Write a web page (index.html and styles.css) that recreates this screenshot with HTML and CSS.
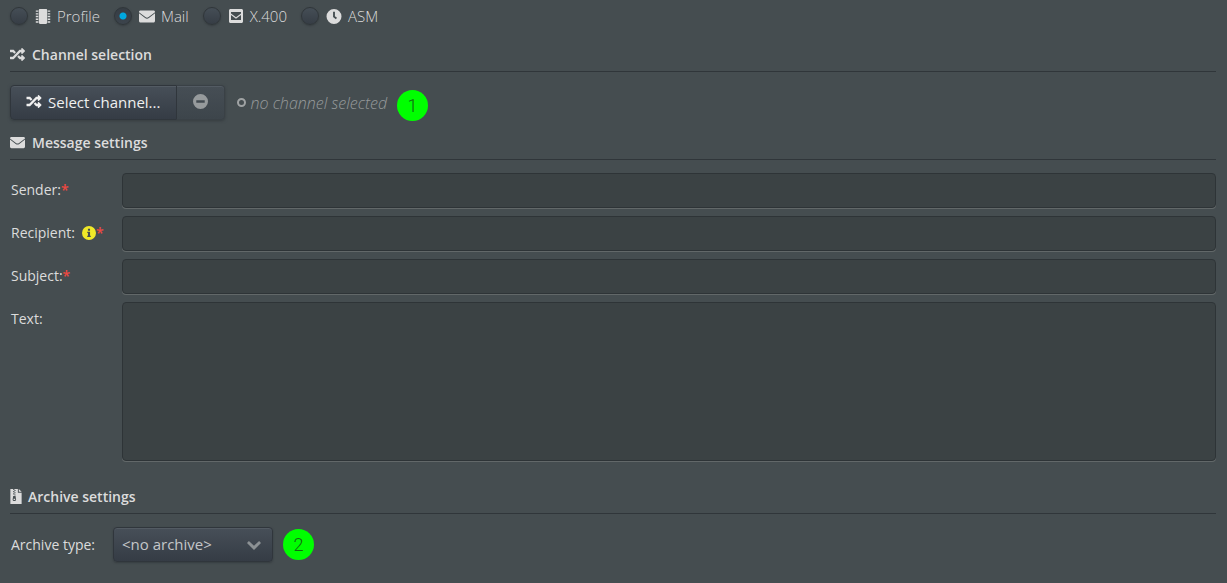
FILE: index.html
```html
<!DOCTYPE html>
<html lang="en">
<head>
<meta charset="utf-8">
<title>Channel configuration</title>
<link rel="stylesheet" href="styles.css">
</head>
<body>
<svg class="sprite" aria-hidden="true">
  <symbol id="shuffle" viewBox="0 0 512 512"><path d="M505 359c9 9 9 25 0 34l-80 80c-15 15-41 4-41-17v-40h-58c-4 0-7-1-9-4l-70-75 53-57 53 56h31v-40c0-21 26-32 41-17zM12 176h84l53 56 53-57-70-75c-2-3-5-4-9-4H12C5 96 0 101 0 108v56c0 7 5 12 12 12zm372 0v40c0 21 26 32 41 17l80-80c9-9 9-25 0-34l-80-80c-15-15-41-4-41 17v40h-58c-3 0-7 1-9 4L96 336H12c-7 0-12 5-12 12v56c0 7 5 12 12 12h111c3 0 6-1 8-4l222-236z"/></symbol>
  <symbol id="mail" viewBox="0 0 16 12"><path d="M1.500 0h13c.8 0 1.500.6 1.500 1.400v.3L9.300 6.700c-.8.600-1.800.600-2.600 0L0 1.700v-.3C0 .6.700 0 1.500 0zM0 2.800l6.100 4.700c1.100.9 2.700.9 3.800 0L16 2.800v7.700c0 .8-.7 1.500-1.500 1.500h-13C.7 12 0 11.300 0 10.500z"/></symbol>
  <symbol id="chip" viewBox="0 0 16 16"><path d="M5 0h6c1 0 1.500.5 1.500 1.500v13c0 1-.5 1.500-1.500 1.500H5c-1 0-1.500-.5-1.500-1.500v-13C3.500.5 4 0 5 0z"/><path d="M.3 1.500H3V3H.3zm0 2.900H3v1.500H.3zm0 2.900H3v1.500H.3zm0 2.900H3v1.500H.3zm0 2.900H3v1.500H.3zM13 1.500h2.700V3H13zm0 2.900h2.700v1.500H13zm0 2.900h2.700v1.500H13zm0 2.900h2.700v1.500H13zm0 2.900h2.700v1.500H13z"/></symbol>
  <symbol id="mailbox" viewBox="0 0 14 14"><path fill-rule="evenodd" d="M1.500 0h11c.8 0 1.500.7 1.500 1.500v11c0 .8-.7 1.500-1.500 1.500h-11C.7 14 0 13.300 0 12.500v-11C0 .7.700 0 1.500 0zM2 3v1.500l5 3.700 5-3.700V3zm0 3v5h10V6L7 9.700z"/></symbol>
  <symbol id="clock" viewBox="0 0 16 16"><path fill-rule="evenodd" d="M8 0a8 8 0 1 1 0 16A8 8 0 0 1 8 0zM7 3v5.600l3 2.300 1.200-1.600L9 7.700V3z"/></symbol>
  <symbol id="minus" viewBox="0 0 16 16"><path fill-rule="evenodd" d="M8 0a8 8 0 1 1 0 16A8 8 0 0 1 8 0zM3.500 6.600v2.800h9V6.600z"/></symbol>
  <symbol id="info" viewBox="0 0 16 16"><path fill-rule="evenodd" d="M8 0a8 8 0 1 1 0 16A8 8 0 0 1 8 0zM6.800 3v2.400h2.400V3zM6 6.500V8h.8v3H6v1.500h4V11h-.8V6.500z"/></symbol>
  <symbol id="zip" viewBox="0 0 12 16"><path fill-rule="evenodd" d="M0 0h3v1h1.300V0H8v4h4v12H0zM9 0l3 3H9zM4.300 1v1.200h1.200V1zM3 2.200v1.200h1.300V2.200zM4.300 3.400v1.200h1.200V3.400zM3 4.600v1.200h1.300V4.600zM4.300 5.800V7h1.200V5.800zM3 7.500l-.6 3.700c0 2.200 3.700 2.200 3.700 0L5.500 7.500zM3.400 10.500h1.700v1.300H3.400z"/></symbol>
  <symbol id="chevron" viewBox="0 0 14 9"><path d="M1.900 0L7 4.700 12.100 0 14 2.100 7 9 0 2.100z"/></symbol>
</svg>
<form class="page">
  <div class="kinds" role="radiogroup" aria-label="Channel kind">
    <label class="kind"><input class="radio" type="radio" name="kind"><svg class="icon icon-wide"><use href="#chip"/></svg>Profile</label>
    <label class="kind"><input class="radio" type="radio" name="kind" checked><svg class="icon icon-wide"><use href="#mail"/></svg>Mail</label>
    <label class="kind"><input class="radio" type="radio" name="kind"><svg class="icon icon-box"><use href="#mailbox"/></svg>X.400</label>
    <label class="kind"><input class="radio" type="radio" name="kind"><svg class="icon icon-wide"><use href="#clock"/></svg>ASM</label>
  </div>

  <h2 class="heading"><svg class="icon"><use href="#shuffle"/></svg>Channel selection</h2>
  <div class="channel">
    <div class="group">
      <button class="button" type="button"><svg class="icon icon-wide"><use href="#shuffle"/></svg>Select channel...</button>
      <button class="button button-clear" type="button" aria-label="Clear channel" disabled><svg class="icon"><use href="#minus"/></svg></button>
    </div>
    <span class="empty"><span class="ring"></span>no channel selected</span>
    <span class="badge badge-low">1</span>
  </div>

  <h2 class="heading"><svg class="icon"><use href="#mail"/></svg>Message settings</h2>
  <div class="fields">
    <label class="label" for="sender">Sender:<span class="required">*</span></label>
    <input class="field" id="sender" type="text">
    <label class="label" for="recipient">Recipient:<svg class="icon info"><use href="#info"/></svg><span class="required">*</span></label>
    <input class="field" id="recipient" type="text">
    <label class="label" for="subject">Subject:<span class="required">*</span></label>
    <input class="field" id="subject" type="text">
    <label class="label" for="text">Text:</label>
    <textarea class="field field-text" id="text"></textarea>
  </div>

  <h2 class="heading heading-file"><svg class="icon icon-file"><use href="#zip"/></svg>Archive settings</h2>
  <div class="archive">
    <label class="label" for="archive">Archive type:</label>
    <div class="picker">
      <select class="select" id="archive"><option>&lt;no archive&gt;</option></select>
      <svg class="chevron"><use href="#chevron"/></svg>
    </div>
    <span class="badge">2</span>
  </div>
</form>
</body>
</html>
```

FILE: styles.css
```css
* { box-sizing: border-box; }

body {
  margin: 0;
  background: #454d50;
  color: #dcdcdc;
  font: 14px/20px "Open Sans", "Noto Sans", sans-serif;
}

.sprite { position: absolute; width: 0; height: 0; }

.page { padding: 6px 11px 20px 10px; }

.icon { width: 15px; height: 15px; flex: none; fill: currentColor; }
.icon-wide { width: 16px; }
.icon-box { width: 14px; height: 14px; margin: 0 1px; }
.icon-file { width: 12px; }

.kinds { display: flex; gap: 14px; }

.kind {
  display: flex;
  align-items: center;
  gap: 6px;
  font-size: 15px;
  font-weight: 300;
}

.radio {
  appearance: none;
  width: 18px;
  height: 18px;
  margin: 0 1px 0 0;
  border: 1px solid #30363a;
  border-radius: 50%;
  background: linear-gradient(#454e56, #363d45);
  box-shadow: 0 1px 2px #363d40;
}

.radio:checked {
  background: radial-gradient(circle, #00a8e0 3px, transparent 4px), linear-gradient(#363d44, #3c444c);
}

.heading {
  display: flex;
  align-items: center;
  gap: 7px;
  height: 32px;
  margin: 14px 0 0;
  padding-bottom: 2px;
  border-bottom: 1px solid #30363a;
  font-size: 14px;
  font-weight: 600;
}

.heading-file { gap: 6px; }

.channel { display: flex; align-items: center; padding-top: 13px; margin-bottom: -6px; }

.group { display: flex; border-radius: 4px; box-shadow: 0 1px 3px #363d40; }

.button {
  display: flex;
  align-items: center;
  gap: 6px;
  height: 35px;
  padding: 0 16px 2px 15px;
  border: 1px solid #30363c;
  border-radius: 4px 0 0 4px;
  background: linear-gradient(#474f58, #353c45);
  box-shadow: inset 0 1px #535b63;
  color: #f0f0f0;
  font: inherit;
  font-size: 15px;
}

.button-clear {
  padding: 0 16px 2px;
  border-color: #3a4146;
  border-left: 0;
  border-radius: 0 4px 4px 0;
  background: linear-gradient(#464e55, #3d454b);
  color: #969a9c;
}

.empty {
  display: flex;
  align-items: center;
  gap: 4px;
  margin-left: 12px;
  color: #969a9b;
  font-size: 16px;
  font-style: italic;
  font-weight: 300;
}

.ring { width: 9px; height: 9px; border: 2px solid #a0a3a4; border-radius: 50%; }

.badge {
  display: grid;
  place-items: center;
  width: 31px;
  height: 31px;
  margin-left: 10px;
  border-radius: 50%;
  background: #00ff00;
  color: #146414;
  font-family: Roboto, "Open Sans", sans-serif;
  font-size: 18px;
  font-weight: 300;
}

.badge-low { align-self: flex-end; margin-bottom: -1px; }

.fields {
  display: grid;
  grid-template-columns: 111px 1fr;
  gap: 8px 0;
  padding: 13px 0 7px 1px;
}

.label { display: flex; align-items: center; height: 33px; }
.required { color: #f04840; font-weight: 600; }
.info { width: 14px; height: 14px; margin-left: 7px; color: #f0e828; }

.field {
  width: 100%;
  height: 35px;
  padding: 6px 8px;
  border: 1px solid #2e3437;
  border-radius: 4px;
  background: #3b4244;
  box-shadow: 0 1px #626869;
  color: inherit;
  font: inherit;
}

.field-text { display: block; height: 159px; resize: vertical; }
.field-text::-webkit-resizer { display: none; }

.archive { display: flex; align-items: center; padding: 13px 0 0 1px; }

.picker { position: relative; width: 160px; margin-left: 18px; }

.select {
  appearance: none;
  width: 100%;
  height: 35px;
  padding: 0 32px 2px 8px;
  border: 1px solid #30363c;
  border-radius: 4px;
  background: linear-gradient(#474f58, #353c45);
  box-shadow: inset 0 1px #535b63, 0 1px 2px #363d40;
  color: #c4c6c8;
  font: inherit;
  font-size: 15px;
}

.chevron {
  position: absolute;
  top: 14px;
  right: 12px;
  width: 14px;
  height: 9px;
  fill: #8c9194;
  pointer-events: none;
}
```
